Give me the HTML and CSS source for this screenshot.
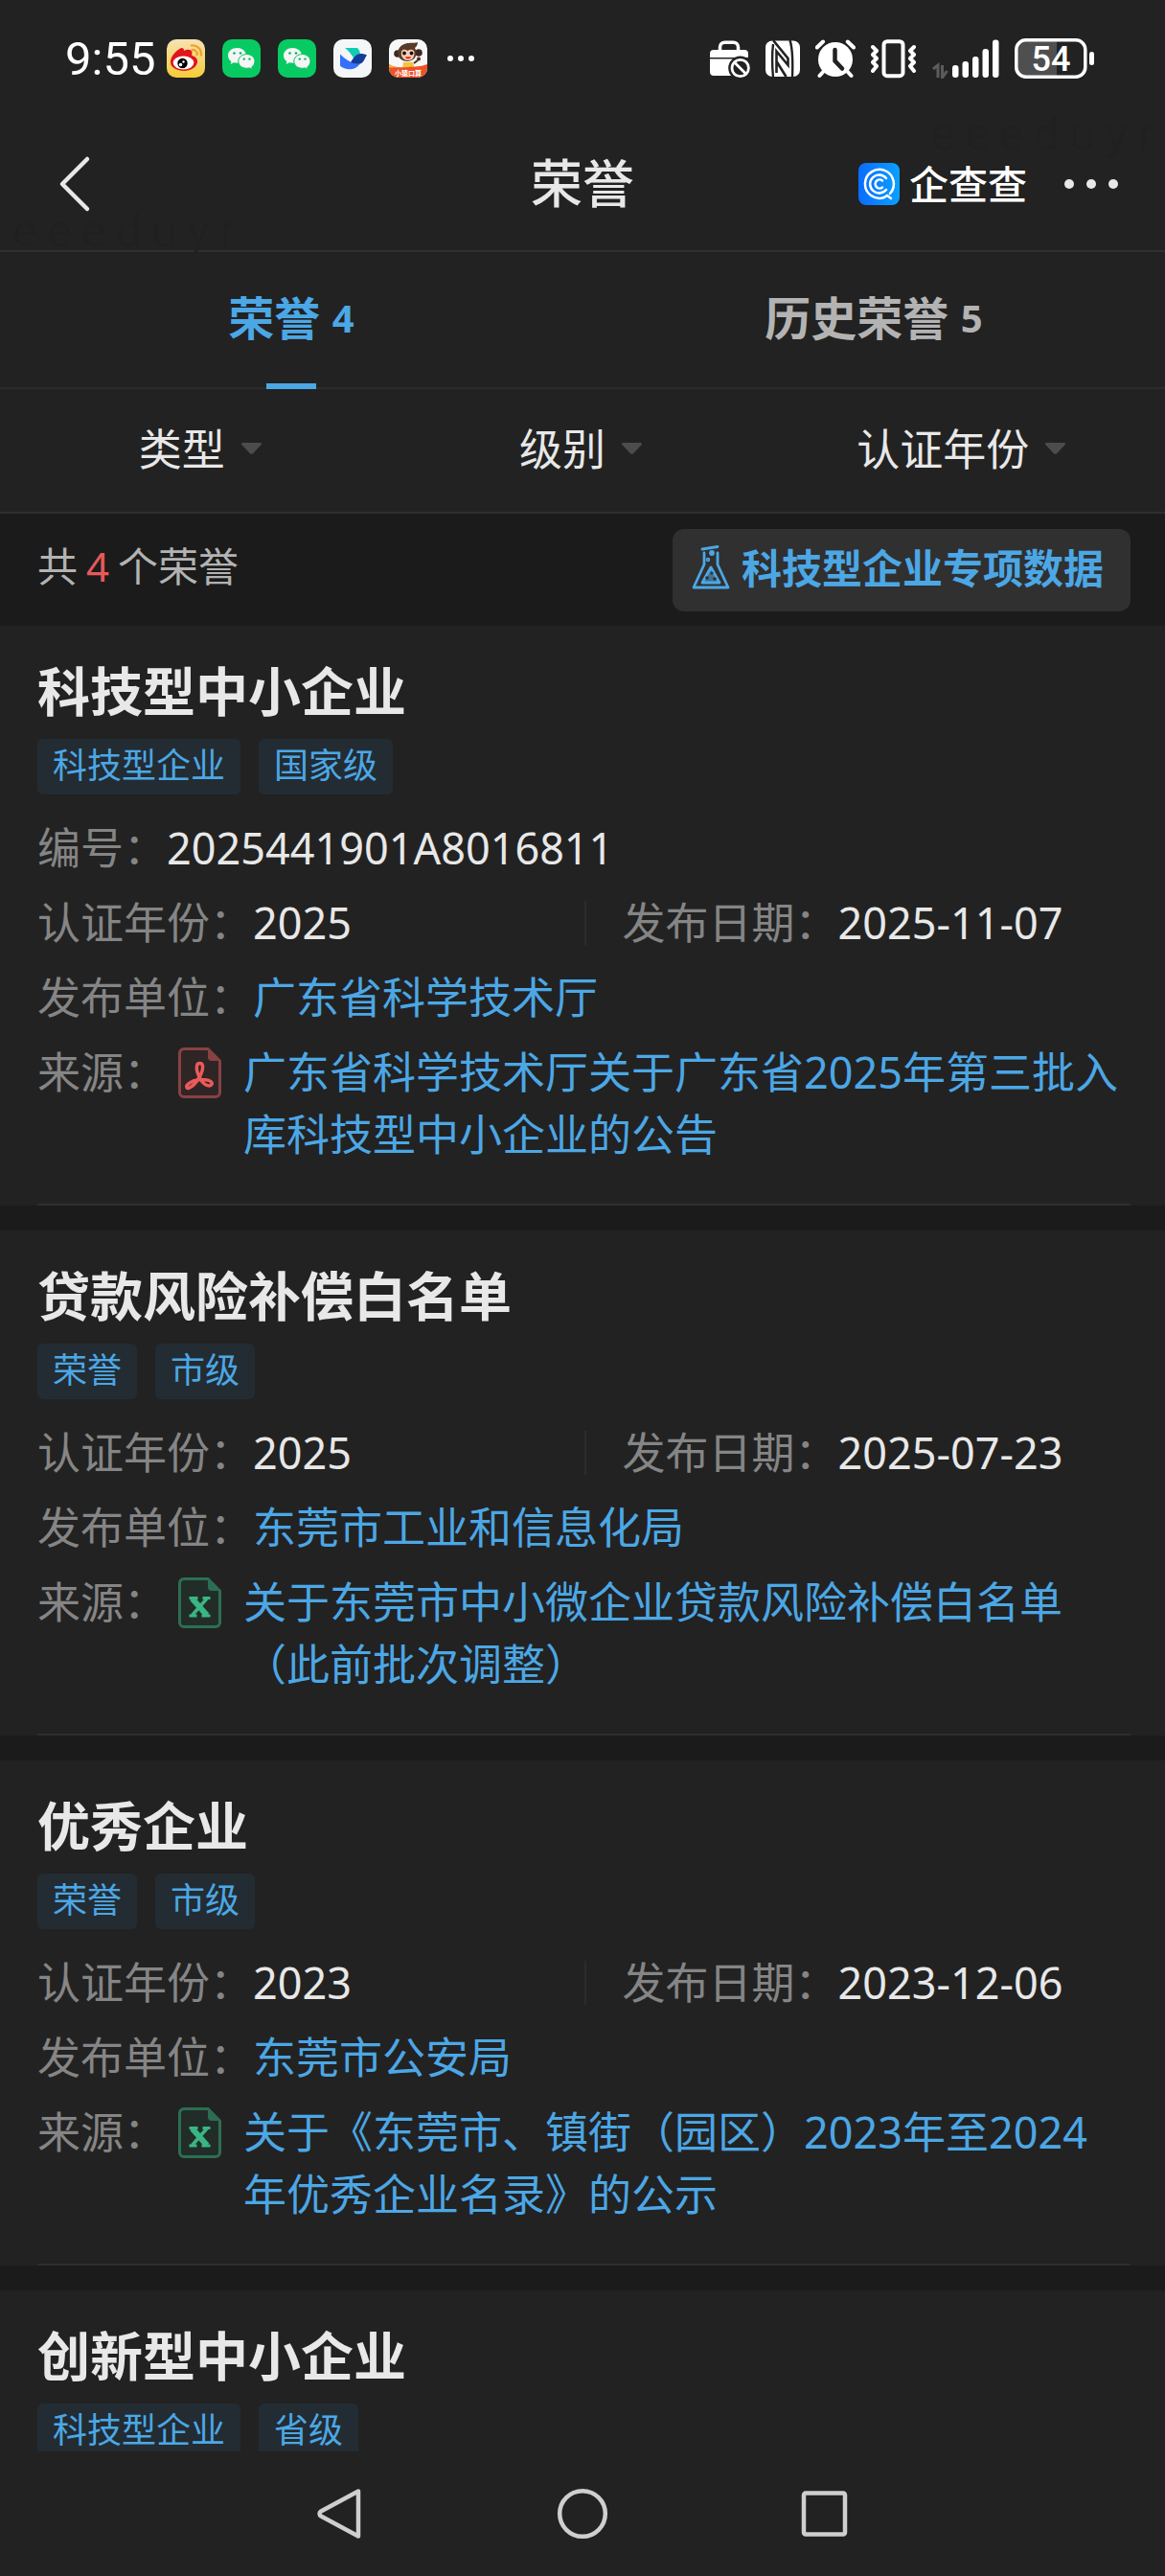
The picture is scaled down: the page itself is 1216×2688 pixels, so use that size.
FILE: index.html
```html
<!DOCTYPE html>
<html lang="zh-CN">
<head>
    <meta charset="UTF-8">
    <meta name="viewport" content="width=device-width, initial-scale=1.0">
    <title>荣誉</title>
    <link rel="stylesheet" href="styles.css">
</head>
<body>
    <!-- 公用图标 -->
    <svg class="sprite" aria-hidden="true">
        <symbol id="wechat" viewBox="0 0 40 40">
            <rect width="40" height="40" rx="10" fill="#07cb62"/>
            <path d="M15.500 9C10 9 6 12.500 6 17c0 2.500 1.300 4.700 3.400 6.200L8.700 26l3.300-1.700c1.200.3 2.400.4 3.600.4C21 24.700 25 21.300 25 17s-4-8-9.500-8z" fill="#f5f5f5"/>
            <circle cx="12.500" cy="14.500" r="1.300" fill="#07b558"/>
            <circle cx="19" cy="14.500" r="1.300" fill="#07b558"/>
            <path d="M25.500 15.600c-5 0-8.700 3.300-8.700 7.400s3.700 7.300 8.700 7.300c1 0 2-.1 3-.4l3 1.500-.7-2.500c2-1.300 3.200-3.500 3.200-5.900 0-4.100-3.700-7.400-8.500-7.400z" fill="#f5f5f5" stroke="#07c45f" stroke-width="1"/>
            <circle cx="22.800" cy="20.600" r="1.200" fill="#07b558"/>
            <circle cx="28.500" cy="20.600" r="1.200" fill="#07b558"/>
        </symbol>
        <symbol id="caret" viewBox="0 0 21 12">
            <path d="M1.500 0h18c1.500 0 2 1.200 1 2.200l-8.500 9c-.8.800-2.200.8-3 0l-8.500-9C-.5 1.200 0 0 1.500 0z" fill="#4c4c4c"/>
        </symbol>
        <symbol id="excel" viewBox="0 0 45 53">
            <path d="M6 1.500h25L43.500 14v33a4.500 4.500 0 0 1-4.500 4.500H6A4.500 4.500 0 0 1 1.500 47V6A4.500 4.500 0 0 1 6 1.500z" fill="#222d29" stroke="#2d6e53" stroke-width="3"/>
            <path d="M31 1.500L43.500 14H35a4 4 0 0 1-4-4z" fill="#2d6e53"/>
            <path d="M14.500 22l15.500 17.500" stroke="#3ab682" stroke-width="6"/>
            <path d="M30 22L14.500 39.500" stroke="#3ab682" stroke-width="3.500"/>
            <path d="M11.500 21.500h9M25.500 21.500h8M11.500 40h8M24.500 40h9" stroke="#3ab682" stroke-width="3"/>
        </symbol>
        <symbol id="pdf" viewBox="0 0 45 53">
            <path d="M6 1.500h25L43.500 14v33a4.500 4.500 0 0 1-4.500 4.500H6A4.500 4.500 0 0 1 1.500 47V6A4.500 4.500 0 0 1 6 1.500z" fill="#2f2525" stroke="#884143" stroke-width="3"/>
            <path d="M31 1.500L43.500 14H35a4 4 0 0 1-4-4z" fill="#884143"/>
            <path d="M22.500 31.500C20 27 19 22 19.500 19c.5-3.500 5.500-3.500 6 0 .5 4-1.500 9-4 13-3 5-7 9-10.500 10.500-2 .5-3-2-1.500-3.500 3-3 9-5.500 15-5.500 4 0 8 .5 10 2.500 1.500 1.500.5 4-2 4-4 0-8-4-10-8.500z" fill="none" stroke="#ec5a5a" stroke-width="3.500" stroke-linejoin="round"/>
        </symbol>
    </svg>

    <div class="screen">
        <div class="status-bar">
            <div class="status-left">
                <span class="clock">9:55</span>
                <div class="app-icons">
                    <svg width="40" height="40" viewBox="0 0 40 40">
                        <defs>
                            <linearGradient id="weiboBg" x1="0" y1="0" x2="0" y2="1">
                                <stop offset="0" stop-color="#f5e3b4"/>
                                <stop offset="1" stop-color="#f5cd35"/>
                            </linearGradient>
                        </defs>
                        <rect width="40" height="40" rx="10" fill="url(#weiboBg)"/>
                        <path d="M12 11c3-2.500 6-3 6 1 3-2 8-2 8.500 1.500.2 2-1 3 .5 3.800 3.500 1 5.500 3.500 5 6.700C31 29.500 25 33 18 33S4 29.500 4 24c0-5 4-10.500 8-13z" fill="#e2141c"/>
                        <ellipse cx="17.500" cy="24.500" rx="10.800" ry="7" fill="#fff"/>
                        <circle cx="16.500" cy="25" r="5.200" fill="#000"/>
                        <circle cx="17.500" cy="23.500" r="1.200" fill="#fff"/>
                        <circle cx="14.500" cy="26.500" r="1.800" fill="#fff"/>
                        <path d="M26 6.500c5.500-.8 10.500 3.700 10 10M26.500 11c3.500-.3 5.500 2 5.200 5" fill="none" stroke="#f3a02c" stroke-width="2.400" stroke-linecap="round"/>
                    </svg>
                    <svg width="40" height="40"><use href="#wechat"/></svg>
                    <svg width="40" height="40"><use href="#wechat"/></svg>
                    <svg width="40" height="40" viewBox="0 0 40 40">
                        <rect width="40" height="40" rx="10" fill="#f5f6f8"/>
                        <path d="M12 9h13c2 2 3 4.500 3 7l-6 5.500C19.500 16.500 16 12 12 9z" fill="#0fcdb5"/>
                        <path d="M7 15.500c5 5 10 8.500 16 10h5C25 29.500 21 31.300 17 31.300c-4 0-7.500-1.300-10-3.500z" fill="#3370fb"/>
                        <path d="M18 24c3-5 6-9 10.500-9 2.500 0 4.500.5 6.500 1.500-2.500 3-3 8-7 9-3.500 1-7-.2-10-1.500z" fill="#133c9a"/>
                    </svg>
                    <svg width="40" height="40" viewBox="0 0 40 40">
                        <defs>
                            <clipPath id="monkeyClip"><rect width="40" height="40" rx="10"/></clipPath>
                        </defs>
                        <g clip-path="url(#monkeyClip)">
                            <rect width="40" height="40" fill="#f7f7f7"/>
                            <path d="M15 24h10l2 8H14z" fill="#f3c33c"/>
                            <circle cx="31" cy="20.500" r="2" fill="#4a2d22"/>
                            <path d="M26 25l4-3" stroke="#4a2d22" stroke-width="2"/>
                            <circle cx="9" cy="15" r="3.800" fill="#3c2822"/>
                            <circle cx="31" cy="14" r="3.800" fill="#3c2822"/>
                            <path d="M16 5c4-2 9-.5 14-2 0 3-1.500 5-3 6 3 5 2 13-7 14-8 0-12-5-10.500-11C10.500 8.500 13 6 16 5z" fill="#58392c"/>
                            <path d="M13 13c1-3 4-2.500 6.500-1 3-2 7-1.500 7 2s-1 8-6.500 8-8-5-7-9z" fill="#f6cdb0"/>
                            <circle cx="16" cy="14.500" r="1.900" fill="#1c1310"/>
                            <circle cx="23.500" cy="14.500" r="1.900" fill="#1c1310"/>
                            <path d="M17 18.300h6c-.5 3-5.500 3-6 0z" fill="#df2a22"/>
                            <path d="M0 26c7 4 14 3.500 20 3s14-.5 20-3v14H0z" fill="#ec5327"/>
                            <path d="M0 26c4 3 9 3.500 14 3.500H0z" fill="#f7b43c"/>
                            <text x="20" y="37.500" class="monkey-label" text-anchor="middle">小猿口算</text>
                        </g>
                    </svg>
                    <svg width="32" height="40" viewBox="0 0 32 40" fill="#fff">
                        <circle cx="6" cy="20" r="3"/><circle cx="17" cy="20" r="3"/><circle cx="28" cy="20" r="3"/>
                    </svg>
                </div>
            </div>
            <div class="status-right">
                <svg width="42" height="42" viewBox="0 0 42 42">
                    <path d="M10.500 12V9a5 5 0 0 1 5-4.800h9A5 5 0 0 1 29.500 9v3" fill="none" stroke="#fff" stroke-width="3.500"/>
                    <path d="M4 12h32a4 4 0 0 1 4 4v4H0v-4a4 4 0 0 1 4-4zM0 21.500h40V35a4 4 0 0 1-4 4H4a4 4 0 0 1-4-4z" fill="#fff"/>
                    <circle cx="31.700" cy="31" r="12.500" fill="#222"/>
                    <circle cx="31.700" cy="31" r="8.700" fill="none" stroke="#fff" stroke-width="2.800"/>
                    <path d="M26 25.500l11.500 11.500" stroke="#fff" stroke-width="2.800"/>
                </svg>
                <svg width="36" height="42" viewBox="0 0 36 42">
                    <rect y="2.500" width="36" height="37.500" rx="7" fill="#fff"/>
                    <path d="M8 2l15.500 19v7L11.500 13.500V36M11.500 24l10 16" fill="none" stroke="#222" stroke-width="2.600"/>
                    <path d="M8 6C6.500 18 7 30 8 41M25.500 2c3 9 3 26 2.500 39" fill="none" stroke="#222" stroke-width="2.400"/>
                </svg>
                <svg width="42" height="42" viewBox="0 0 42 42">
                    <path d="M1.800 9.500L8 3.500M40 9.500l-6.200-6M9 34l-4.500 5M33 34l4.500 5" stroke="#fff" stroke-width="4" stroke-linecap="round"/>
                    <circle cx="21" cy="22" r="18" fill="#fff"/>
                    <path d="M20.500 12v11.500l7.500 8" fill="none" stroke="#222" stroke-width="4.500" stroke-linecap="round"/>
                </svg>
                <svg width="48" height="42" viewBox="0 0 48 42" fill="none" stroke="#fff">
                    <rect x="13.500" y="3.200" width="20" height="36" rx="3.500" stroke-width="4"/>
                    <path d="M2 9l4 4-4 4 4 4-4 4 4 4-4 5M45 9l-4 4 4 4-4 4 4 4-4 4 4 5" stroke-width="4" stroke-linecap="round" stroke-linejoin="round"/>
                </svg>
                <svg width="70" height="42" viewBox="0 0 70 42">
                    <path d="M1 32l5-4v13M10.500 28v13l5-7" fill="none" stroke="#5c5c5c" stroke-width="3"/>
                    <g fill="#fff">
                        <rect x="21" y="28" width="6.500" height="13" rx="3"/>
                        <rect x="31.500" y="24" width="6.500" height="17" rx="3"/>
                        <rect x="42" y="19" width="6.500" height="22" rx="3"/>
                        <rect x="52.500" y="11" width="6.500" height="30" rx="3"/>
                        <rect x="63" y="1.500" width="6.500" height="39.500" rx="3"/>
                    </g>
                </svg>
                <svg width="84" height="42" viewBox="0 0 84 42">
                    <path d="M12 3h32v36H12a10 10 0 0 1-10-10V13A10 10 0 0 1 12 3z" fill="#4f4f4f"/>
                    <rect x="1.800" y="1.800" width="72" height="38.400" rx="10" fill="none" stroke="#fff" stroke-width="3.500"/>
                    <rect x="78" y="14" width="5" height="14" rx="2.500" fill="#fff"/>
                    <text x="38" y="34" class="battery-level" text-anchor="middle">54</text>
                </svg>
            </div>
        </div>

        <header class="header">
            <div class="header-side">
                <button class="icon-btn" aria-label="返回">
                    <svg width="60" height="60" viewBox="0 0 60 60"><path d="M43 4L17 30l26 26" fill="none" stroke="#e8e8e8" stroke-width="4.500" stroke-linecap="round" stroke-linejoin="round"/></svg>
                </button>
            </div>
            <h1>荣誉</h1>
            <div class="header-side header-right">
                <div class="brand">
                    <svg width="43" height="44" viewBox="0 0 43 44">
                        <defs>
                            <linearGradient id="brandBg" x1="0" y1="0" x2="1" y2="0">
                                <stop offset="0" stop-color="#0a6cff"/>
                                <stop offset="1" stop-color="#0ba0ff"/>
                            </linearGradient>
                        </defs>
                        <rect width="43" height="44" rx="8" fill="url(#brandBg)"/>
                        <g fill="none" stroke="#fff" stroke-width="2.500" stroke-linecap="round">
                            <path d="M33 32a15 15 0 1 0-6 4l3-2 4 3"/>
                            <path d="M29 16a9.500 9.500 0 1 0 0 12"/>
                            <path d="M25 18.500a4.500 4.500 0 1 0 0 7"/>
                        </g>
                    </svg>
                    <span>企查查</span>
                </div>
                <button class="icon-btn" aria-label="更多">
                    <svg width="58" height="20" viewBox="0 0 58 20" fill="#e8e8e8">
                        <circle cx="6" cy="10" r="5"/><circle cx="29" cy="10" r="5"/><circle cx="52" cy="10" r="5"/>
                    </svg>
                </button>
            </div>
            <span class="watermark watermark-left" aria-hidden="true">e e e d u y r</span>
            <span class="watermark watermark-right" aria-hidden="true">e e e d u y r</span>
        </header>

        <nav class="tabs">
            <a href="#" class="tab active">荣誉 <span>4</span></a>
            <a href="#" class="tab">历史荣誉 <span>5</span></a>
        </nav>

        <div class="filters">
            <label class="filter">
                <select aria-label="类型"><option>类型</option></select>
                <svg width="21" height="12"><use href="#caret"/></svg>
            </label>
            <label class="filter">
                <select aria-label="级别"><option>级别</option></select>
                <svg width="21" height="12"><use href="#caret"/></svg>
            </label>
            <label class="filter">
                <select aria-label="认证年份"><option>认证年份</option></select>
                <svg width="21" height="12"><use href="#caret"/></svg>
            </label>
        </div>

        <div class="summary">
            <p class="count">共<b>4</b>个荣誉</p>
            <button class="special-btn">
                <svg width="40" height="48" viewBox="0 0 40 48" fill="none" stroke="#4ca7e5" stroke-width="2.800" stroke-linecap="round" stroke-linejoin="round">
                    <path d="M11 6l16-2.500M13 10v12L2 46h36L27 22V10"/>
                    <path d="M20 25l9 16H11z" fill="#4ca7e5" fill-opacity=".55"/>
                    <circle cx="21" cy="10" r="1.500"/><circle cx="17" cy="17" r=".8"/>
                    <circle cx="21" cy="31" r="1.500" fill="#303030" stroke="none"/>
                    <circle cx="16" cy="36" r="1.800" fill="#303030" stroke="none"/>
                    <circle cx="24" cy="37" r="1.800" fill="#303030" stroke="none"/>
                </svg>
                科技型企业专项数据
            </button>
        </div>

        <main class="list">
            <article class="card">
                <h2>科技型中小企业</h2>
                <div class="tags"><span class="tag">科技型企业</span><span class="tag">国家级</span></div>
                <div class="info">
                    <div class="row"><span class="label">编号：</span><span>2025441901A8016811</span></div>
                    <div class="row row-pair">
                        <div><span class="label">认证年份：</span><span>2025</span></div>
                        <div class="date"><span class="label">发布日期：</span><span>2025-11-07</span></div>
                    </div>
                    <div class="row"><span class="label">发布单位：</span><a href="#">广东省科学技术厅</a></div>
                    <div class="row">
                        <span class="label">来源：</span>
                        <svg class="file-icon" width="45" height="53"><use href="#pdf"/></svg>
                        <a href="#" class="source">广东省科学技术厅关于广东省2025年第三批入库科技型中小企业的公告</a>
                    </div>
                </div>
            </article>

            <article class="card">
                <h2>贷款风险补偿白名单</h2>
                <div class="tags"><span class="tag">荣誉</span><span class="tag">市级</span></div>
                <div class="info">
                    <div class="row row-pair">
                        <div><span class="label">认证年份：</span><span>2025</span></div>
                        <div class="date"><span class="label">发布日期：</span><span>2025-07-23</span></div>
                    </div>
                    <div class="row"><span class="label">发布单位：</span><a href="#">东莞市工业和信息化局</a></div>
                    <div class="row">
                        <span class="label">来源：</span>
                        <svg class="file-icon" width="45" height="53"><use href="#excel"/></svg>
                        <a href="#" class="source">关于东莞市中小微企业贷款风险补偿白名单（此前批次调整）</a>
                    </div>
                </div>
            </article>

            <article class="card">
                <h2>优秀企业</h2>
                <div class="tags"><span class="tag">荣誉</span><span class="tag">市级</span></div>
                <div class="info">
                    <div class="row row-pair">
                        <div><span class="label">认证年份：</span><span>2023</span></div>
                        <div class="date"><span class="label">发布日期：</span><span>2023-12-06</span></div>
                    </div>
                    <div class="row"><span class="label">发布单位：</span><a href="#">东莞市公安局</a></div>
                    <div class="row">
                        <span class="label">来源：</span>
                        <svg class="file-icon" width="45" height="53"><use href="#excel"/></svg>
                        <a href="#" class="source">关于《东莞市、镇街（园区）2023年至2024年优秀企业名录》的公示</a>
                    </div>
                </div>
            </article>

            <article class="card">
                <h2>创新型中小企业</h2>
                <div class="tags"><span class="tag">科技型企业</span><span class="tag">省级</span></div>
            </article>
        </main>

        <div class="nav-bar">
            <button class="icon-btn" aria-label="后退">
                <svg width="54" height="54" viewBox="0 0 54 54"><path d="M47 3.500v47L8 29.500c-2-1.200-2-3.800 0-5z" fill="none" stroke="#cfcfcf" stroke-width="4.500" stroke-linejoin="round"/></svg>
            </button>
            <button class="icon-btn" aria-label="主页">
                <svg width="54" height="54" viewBox="0 0 54 54"><circle cx="27" cy="27" r="23.800" fill="none" stroke="#cfcfcf" stroke-width="4.500"/></svg>
            </button>
            <button class="icon-btn" aria-label="最近任务">
                <svg width="54" height="54" viewBox="0 0 54 54"><rect x="4" y="5.500" width="43" height="43" rx="2" fill="none" stroke="#cfcfcf" stroke-width="4.500"/></svg>
            </button>
        </div>
    </div>
</body>
</html>
```

FILE: styles.css
```css
* {
    box-sizing: border-box;
}

body {
    margin: 0;
    background-color: #222;
    color: #e8e8e8;
    font-family: 'Noto Sans', 'Noto Sans CJK SC', sans-serif;
    font-size: 45px;
    line-height: 65px;
}

h1, h2, p {
    margin: 0;
}

a {
    color: #4ca7e5;
    text-decoration: none;
}

svg {
    display: block;
    flex-shrink: 0;
}

.sprite {
    display: none;
}

.screen {
    display: flex;
    flex-direction: column;
    height: 100vh;
    overflow: hidden;
}

.icon-btn {
    padding: 0;
    border: none;
    background: none;
    cursor: pointer;
}

/* status bar */
.status-bar {
    display: flex;
    justify-content: space-between;
    align-items: center;
    height: 122px;
    padding: 0 73px 0 68px;
    flex-shrink: 0;
}

.status-left, .status-right {
    display: flex;
    align-items: center;
}

.status-left {
    gap: 12px;
}

.status-right {
    gap: 16px;
}

.app-icons {
    display: flex;
    gap: 18px;
}

.clock {
    font-family: Roboto, sans-serif;
    font-size: 49px;
    color: #fff;
}

.battery-level {
    font-family: Roboto, sans-serif;
    font-size: 36px;
    font-weight: 500;
    fill: #fff;
}

.monkey-label {
    font-size: 7px;
    font-weight: bold;
    fill: #fff;
}

/* header */
.header {
    position: relative;
    display: flex;
    align-items: center;
    height: 141px;
    padding: 0 48px;
    border-bottom: 2px solid #303030;
    flex-shrink: 0;
}

.header h1 {
    font-size: 54px;
    font-weight: 500;
}

.header-side {
    flex: 1;
    display: flex;
    align-items: center;
}

.header-right {
    justify-content: flex-end;
    gap: 38px;
}

.brand {
    display: flex;
    align-items: center;
    gap: 10px;
    font-size: 41px;
    font-weight: 500;
    line-height: 44px;
    color: #fff;
}

.watermark {
    position: absolute;
    font-family: Roboto, sans-serif;
    font-size: 47px;
    font-weight: 300;
    line-height: 48px;
    color: #202020;
    pointer-events: none;
}

.watermark-left {
    left: 14px;
    bottom: -4px;
}

.watermark-right {
    right: 12px;
    top: -6px;
}

/* tabs */
.tabs {
    display: flex;
    height: 143px;
    border-bottom: 2px solid #2c2c2c;
    flex-shrink: 0;
}

.tab {
    position: relative;
    flex: 1;
    text-align: center;
    font-size: 48px;
    font-weight: bold;
    line-height: 138px;
    color: #b3b3b3;
}

.tab span {
    font-size: 40px;
    line-height: 1;
    vertical-align: 3px;
}

.tab.active {
    color: #4ca7e5;
}

.tab.active::after {
    content: '';
    position: absolute;
    left: 50%;
    bottom: -2px;
    width: 52px;
    height: 6px;
    margin-left: -26px;
    background-color: #4ca7e5;
}

/* filters */
.filters {
    display: flex;
    height: 130px;
    padding: 0 14px 4px 10px;
    border-bottom: 2px solid #2e2e2e;
    flex-shrink: 0;
}

.filter {
    flex: 1;
    display: flex;
    align-items: center;
    justify-content: center;
    gap: 16px;
}

.filter select {
    appearance: none;
    padding: 0;
    border: none;
    background: none;
    color: #e8e8e8;
    font: inherit;
    cursor: pointer;
}

/* summary */
.summary {
    display: flex;
    align-items: center;
    justify-content: space-between;
    height: 117px;
    padding: 0 36px 0 39px;
    background-color: #1b1b1b;
    flex-shrink: 0;
}

.count {
    padding-bottom: 8px;
    font-size: 42px;
    color: #b3b3b3;
}

.count b {
    margin: 0 9px;
    font-weight: normal;
    color: #e65a5a;
}

.special-btn {
    display: flex;
    align-items: center;
    gap: 12px;
    height: 86px;
    padding: 0 28px 8px 20px;
    border: none;
    border-radius: 12px;
    background-color: #303030;
    color: #4ca7e5;
    font-family: inherit;
    font-size: 42px;
    font-weight: bold;
    cursor: pointer;
}

/* list */
.list {
    flex: 1;
    min-height: 0;
    overflow: hidden;
    display: flex;
    flex-direction: column;
    gap: 26px;
    background-color: #1b1b1b;
}

.card {
    flex-shrink: 0;
    padding: 35px 36px 0 39px;
    background-color: #222;
}

.card h2 {
    font-size: 55px;
    font-weight: bold;
    line-height: 66px;
}

.tags {
    display: flex;
    gap: 19px;
    margin-top: 17px;
}

.tag {
    height: 58px;
    padding: 0 16px;
    border-radius: 6px;
    background-color: #232c32;
    color: #4ca7e5;
    font-size: 36px;
    line-height: 56px;
}

.info {
    display: flex;
    flex-direction: column;
    gap: 13px;
    margin-top: 23px;
    padding-bottom: 40px;
    border-bottom: 2px solid #2e2e2e;
}

.row {
    display: flex;
}

.label {
    color: #858585;
    white-space: nowrap;
}

.row-pair {
    align-items: center;
}

.row-pair > div {
    width: 50%;
}

.row-pair .date {
    padding-left: 38px;
    border-left: 2px solid #2c2c2c;
    line-height: 46px;
    white-space: nowrap;
}

.file-icon {
    margin: 7px 23px 0 12px;
}

.source {
    flex: 1;
    padding-right: 6px;
}

/* bottom navigation */
.nav-bar {
    display: flex;
    justify-content: center;
    align-items: center;
    gap: 200px;
    height: 130px;
    background-color: #222;
    flex-shrink: 0;
}
```
